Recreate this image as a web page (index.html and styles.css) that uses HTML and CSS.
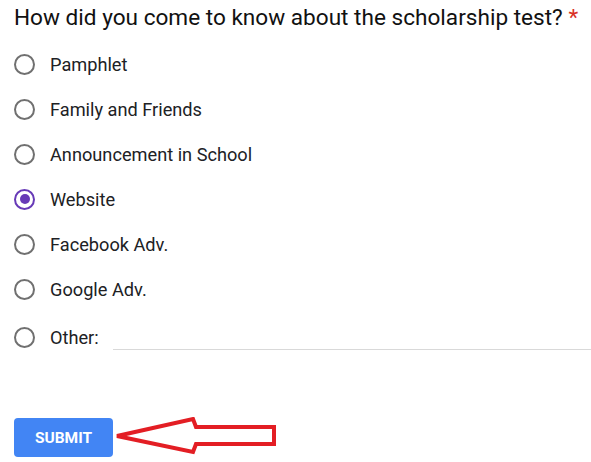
FILE: index.html
```html
<!DOCTYPE html>
<html>
<head>
<meta charset="utf-8">
<link rel="stylesheet" href="styles.css">
</head>
<body>
<div class="form">
  <div class="question">How did you come to know about the scholarship test? <span class="req">*</span></div>
  <div class="options">
    <label class="opt"><span class="radio"></span><span class="lbl">Pamphlet</span></label>
    <label class="opt"><span class="radio"></span><span class="lbl">Family and Friends</span></label>
    <label class="opt"><span class="radio"></span><span class="lbl">Announcement in School</span></label>
    <label class="opt"><span class="radio checked"></span><span class="lbl">Website</span></label>
    <label class="opt"><span class="radio"></span><span class="lbl">Facebook Adv.</span></label>
    <label class="opt"><span class="radio"></span><span class="lbl">Google Adv.</span></label>
    <label class="opt other"><span class="radio"></span><span class="lbl">Other:</span><span class="line"></span></label>
  </div>
  <div class="actions">
    <button class="submit">SUBMIT</button>
    <svg class="arrow" width="164" height="40" viewBox="0 0 164 40">
      <polygon points="3,19 79,2 82,10 160,10 160,27 82,27 79,35" fill="none" stroke="#e31e24" stroke-width="4" stroke-linejoin="miter"/>
    </svg>
  </div>
</div>
</body>
</html>
```
FILE: styles.css
```css
html, body {
  margin: 0;
  padding: 0;
  background: #fff;
}
body {
  font-family: Roboto, "Liberation Sans", sans-serif;
  color: #202124;
}
.form {
  padding: 3px 0 0 14px;
}
.question {
  font-size: 22.6px;
  line-height: 30px;
  color: #111;
}
.req {
  color: #d93025;
}
.options {
  margin-top: 21px;
  display: flex;
  flex-direction: column;
  gap: 25px;
}
.opt {
  display: flex;
  align-items: center;
  height: 20px;
}
.radio {
  box-sizing: border-box;
  width: 21px;
  height: 21px;
  border: 2px solid #707070;
  border-radius: 50%;
  flex: none;
  position: relative;
}
.radio.checked {
  border-color: #673ab7;
}
.radio.checked::after {
  content: "";
  position: absolute;
  left: 3.5px;
  top: 3.5px;
  width: 10px;
  height: 10px;
  border-radius: 50%;
  background: #673ab7;
}
.lbl {
  margin-left: 15px;
  font-size: 18.2px;
  color: #202124;
}
.other {
  margin-top: 3px;
}
.line {
  flex: 1;
  align-self: flex-end;
  height: 1px;
  background: #d9d9d9;
  margin-left: 14px;
  margin-bottom: -3px;
}
.actions {
  margin-top: 71px;
  display: flex;
  align-items: flex-start;
}
.submit {
  width: 99px;
  height: 39px;
  border: none;
  border-radius: 4px;
  background: #4285f4;
  color: #fff;
  font-family: Roboto, "Liberation Sans", sans-serif;
  font-weight: 700;
  font-size: 15.5px;
  padding: 0;
}
.arrow {
  margin-left: 1px;
  margin-top: -1px;
}
```
